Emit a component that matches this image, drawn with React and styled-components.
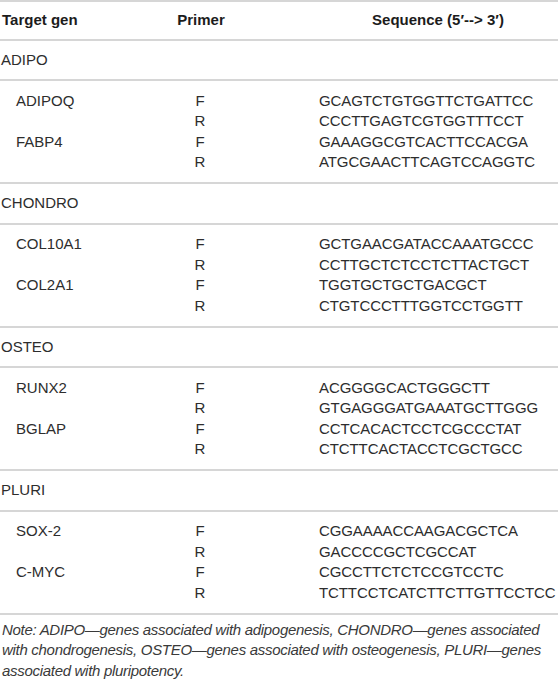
import React from 'react'
import styled, { createGlobalStyle } from 'styled-components'

const groups = [
  {
    name: 'ADIPO',
    genes: [
      { gene: 'ADIPOQ', f: 'GCAGTCTGTGGTTCTGATTCC', r: 'CCCTTGAGTCGTGGTTTCCT' },
      { gene: 'FABP4', f: 'GAAAGGCGTCACTTCCACGA', r: 'ATGCGAACTTCAGTCCAGGTC' },
    ],
  },
  {
    name: 'CHONDRO',
    genes: [
      { gene: 'COL10A1', f: 'GCTGAACGATACCAAATGCCC', r: 'CCTTGCTCTCCTCTTACTGCT' },
      { gene: 'COL2A1', f: 'TGGTGCTGCTGACGCT', r: 'CTGTCCCTTTGGTCCTGGTT' },
    ],
  },
  {
    name: 'OSTEO',
    genes: [
      { gene: 'RUNX2', f: 'ACGGGGCACTGGGCTT', r: 'GTGAGGGATGAAATGCTTGGG' },
      { gene: 'BGLAP', f: 'CCTCACACTCCTCGCCCTAT', r: 'CTCTTCACTACCTCGCTGCC' },
    ],
  },
  {
    name: 'PLURI',
    genes: [
      { gene: 'SOX-2', f: 'CGGAAAACCAAGACGCTCA', r: 'GACCCCGCTCGCCAT' },
      { gene: 'C-MYC', f: 'CGCCTTCTCTCCGTCCTC', r: 'TCTTCCTCATCTTCTTGTTCCTCC' },
    ],
  },
]

export default function App() {
  return <>
    <Global />
    <Page>
      <Table>
        <HeaderRow>
          <HeadCell>Target gen</HeadCell>
          <HeadCell center>Primer</HeadCell>
          <HeadCell center>Sequence (5′--&gt; 3′)</HeadCell>
        </HeaderRow>
        {groups.map(g => (
          <React.Fragment key={g.name}>
            <GroupRow>{g.name}</GroupRow>
            <Block>
              {g.genes.map(x => (
                <React.Fragment key={x.gene}>
                  <Line>
                    <Gene>{x.gene}</Gene>
                    <Primer>F</Primer>
                    <Seq>{x.f}</Seq>
                  </Line>
                  <Line>
                    <Gene />
                    <Primer>R</Primer>
                    <Seq>{x.r}</Seq>
                  </Line>
                </React.Fragment>
              ))}
            </Block>
          </React.Fragment>
        ))}
      </Table>
      <Note>
        Note: ADIPO—genes associated with adipogenesis, CHONDRO—genes associated<br />
        with chondrogenesis, OSTEO—genes associated with osteogenesis, PLURI—genes<br />
        associated with pluripotency.
      </Note>
    </Page>
  </>
}

const Global = createGlobalStyle`
  body {
    margin: 0;
    background: #fff;
  }
`

const Page = styled.div`
  width: 558px;
  font-family: "Liberation Sans", Arial, Helvetica, sans-serif;
  font-size: 15px;
  line-height: 20.5px;
  color: #2d2d2d;
`

const Table = styled.div`
  border-top: 2px solid #d6d6d6;
`

const cols = `
  display: grid;
  grid-template-columns: 84px 232px 1fr;
`

const HeaderRow = styled.div`
  ${cols}
  padding: 8px 0;
  border-bottom: 2px solid #d6d6d6;
  font-weight: bold;
  color: #1c1c1c;
`

const HeadCell = styled.div`
  text-align: ${p => (p.center ? 'center' : 'left')};
  padding-left: 2px;
  white-space: nowrap;
`

const GroupRow = styled.div`
  padding: 9px 0 9px 1px;
  border-bottom: 2px solid #d6d6d6;
`

const Block = styled.div`
  padding: 9.5px 0;
  border-bottom: 2px solid #d6d6d6;
`

const Line = styled.div`
  ${cols}
`

const Gene = styled.div`
  padding-left: 16px;
  white-space: nowrap;
`

const Primer = styled.div`
  text-align: center;
`

const Seq = styled.div`
  padding-left: 3px;
  white-space: nowrap;
  letter-spacing: -0.1px;
`

const Note = styled.p`
  margin: 0;
  padding: 5px 0 0 2px;
  font-style: italic;
  line-height: 20.5px;
  letter-spacing: -0.3px;
  white-space: nowrap;
  color: #3a3a3a;
`
